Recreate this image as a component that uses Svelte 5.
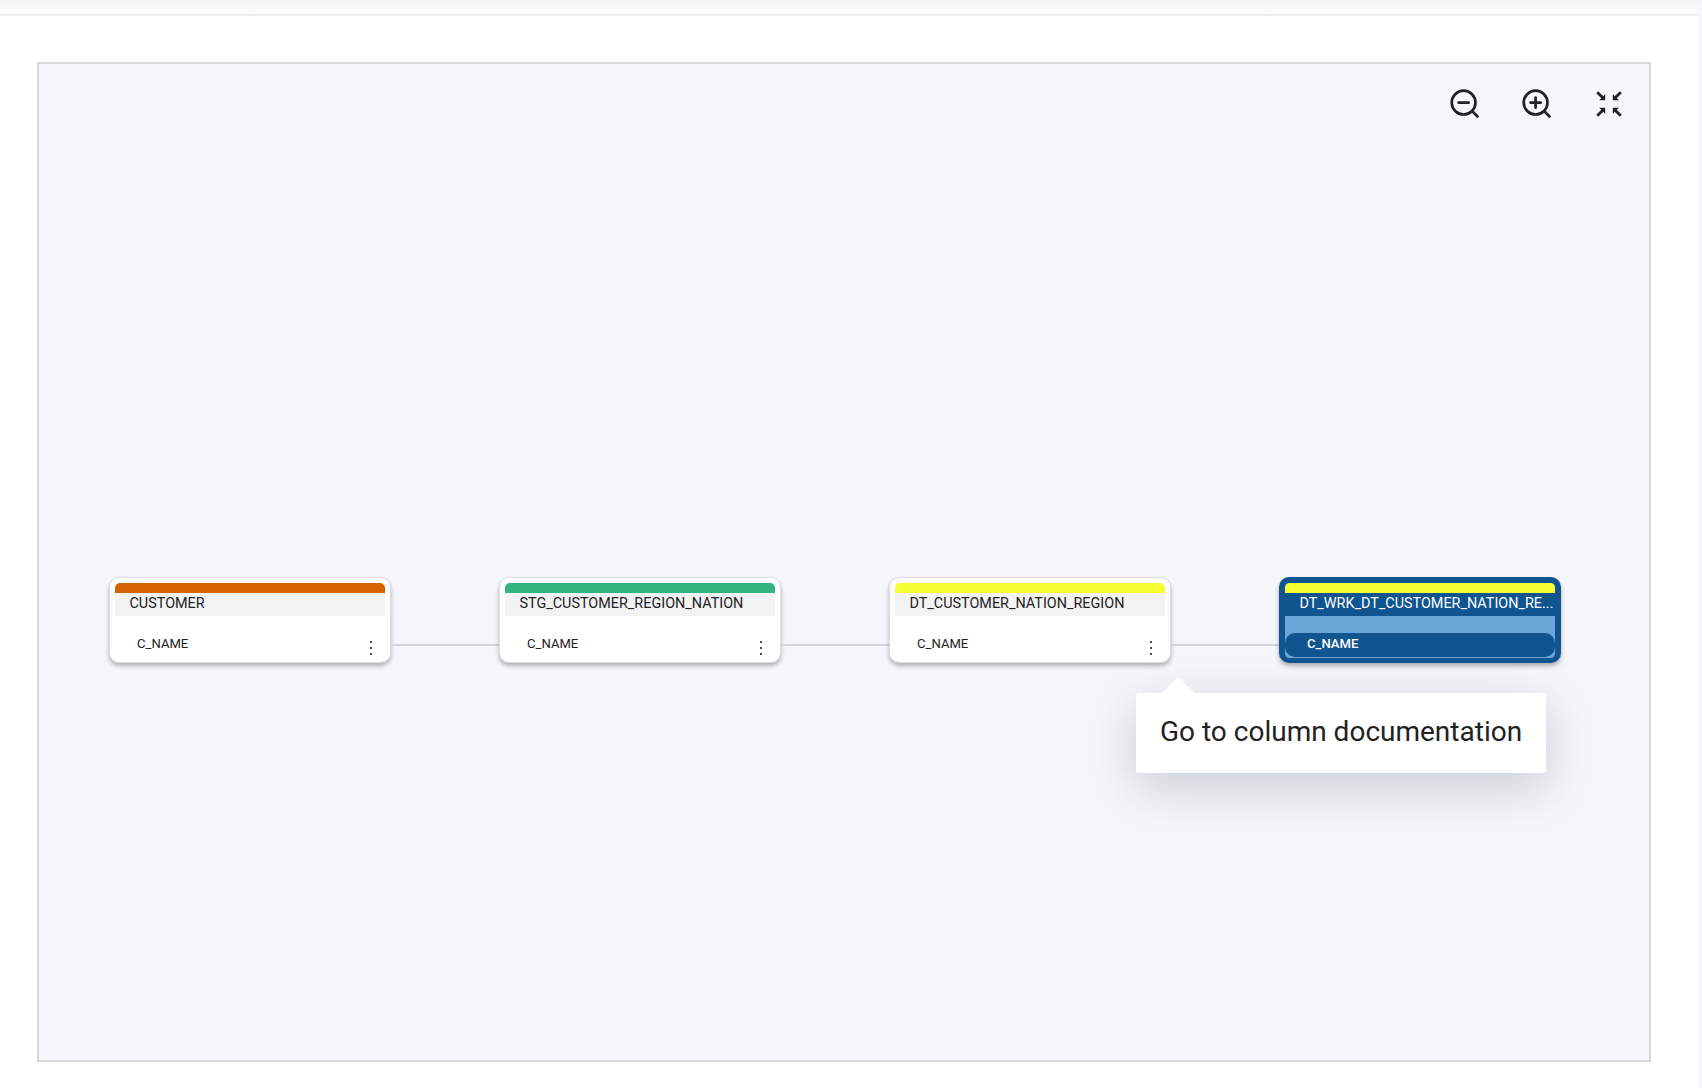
<script lang="ts">
	const nodes = [
		{ name: "CUSTOMER", bar: "#d46300" },
		{ name: "STG_CUSTOMER_REGION_NATION", bar: "#31b57f" },
		{ name: "DT_CUSTOMER_NATION_REGION", bar: "#f6ff33" },
		{ name: "DT_WRK_DT_CUSTOMER_NATION_RE...", bar: "#f6ff33", active: true },
	];
</script>

<div class="page">
	<div class="main">
		<header class="topbar"></header>
		<section class="canvas">
			<div class="toolbar">
				<svg viewBox="0 0 32 32" width="32" height="32" fill="none" stroke="#222" stroke-width="2.7" stroke-linecap="round">
					<circle cx="14.6" cy="14.6" r="11.9" />
					<path d="M23.5 23.5l5 5M9.5 14.6h10.2" />
				</svg>
				<svg viewBox="0 0 32 32" width="32" height="32" fill="none" stroke="#222" stroke-width="2.7" stroke-linecap="round">
					<circle cx="14.6" cy="14.6" r="11.9" />
					<path d="M23.5 23.5l5 5M9.5 14.6h10.2M14.6 9.5v10.2" />
				</svg>
				<svg class="shrink" viewBox="0 0 28 28" width="28" height="28" fill="#222" stroke="#222">
					{#each [0, 90, 180, 270] as angle}
						<g transform="rotate({angle} 14 14)">
							<path d="M10.2 10.2V4.2L4.2 10.2z" stroke="none" />
							<path d="M2.2 2.2L7.6 7.6" stroke-width="2.8" />
						</g>
					{/each}
				</svg>
			</div>

			<div class="flow">
				{#each nodes as node, i}
					{#if i > 0}
						<div class="edge"></div>
					{/if}
					<article class="node" class:active={node.active}>
						<div class="bar" style="background: {node.bar}"></div>
						<div class="title">{node.name}</div>
						<div class="column">
							<span>C_NAME</span>
							{#if !node.active}
								<svg class="more" viewBox="0 0 4 16" width="4" height="16" fill="#222">
									<circle cx="2" cy="2" r="1.1" />
									<circle cx="2" cy="8" r="1.1" />
									<circle cx="2" cy="14" r="1.1" />
								</svg>
							{/if}
						</div>
					</article>
				{/each}
			</div>

			<div class="tooltip">Go to column documentation</div>
		</section>
	</div>
	<div class="strip"></div>
</div>

<style>
	:global(body) {
		margin: 0;
		background: #fff;
	}

	* {
		box-sizing: border-box;
	}

	.page {
		display: flex;
		height: 1088px;
		font-family: Roboto, sans-serif;
		color: #222;
		overflow: hidden;
	}

	.main {
		flex: 1;
		min-width: 0;
	}

	.strip {
		width: 3px;
		background: #f6f6fa;
	}

	.topbar {
		height: 16px;
		background: linear-gradient(#f3f3f3, #fdfdfd 12px);
		border-bottom: 2px solid #eeeeee;
	}

	.canvas {
		position: relative;
		width: 1614px;
		height: 1000px;
		margin: 46px 0 0 37px;
		background: #f4f6fa;
		border: 2px solid #d9d9d9;
		padding: 513px 0 0 70px;
	}

	.toolbar {
		position: absolute;
		top: 24px;
		right: 26px;
		display: flex;
		align-items: flex-start;
		gap: 40px;
	}

	.shrink {
		margin: 2px 0 0 2px;
	}

	.flow {
		display: flex;
		align-items: flex-start;
	}

	.edge {
		width: 108px;
		height: 2px;
		margin-top: 67px;
		background: #d3d5da;
	}

	.node {
		width: 282px;
		height: 86px;
		padding: 5px;
		background: #fff;
		border: 1px solid #dcdcdc;
		border-radius: 10px;
		box-shadow: 0 3px 4px rgba(0, 0, 0, 0.28);
		font-size: 14.4px;
	}

	.bar {
		height: 10px;
		border-radius: 5px 5px 0 0;
	}

	.title {
		height: 23px;
		padding-left: 14.5px;
		background: #f3f3f3;
		line-height: 21px;
		white-space: nowrap;
		overflow: hidden;
	}

	.column {
		position: relative;
		height: 25px;
		margin-top: 18px;
		padding-left: 22px;
		font-size: 13.1px;
		line-height: 20px;
		border-radius: 10px;
	}

	.more {
		position: absolute;
		right: 12px;
		top: 6px;
	}

	.active {
		background: #6ca6d9;
		border: solid #10558f;
		border-width: 6px 6px 5px;
		padding: 0;
		color: #fff;
		box-shadow: 0 3px 5px rgba(0, 0, 0, 0.3);
	}

	.active .title {
		background: #10558f;
	}

	.active .column {
		height: 24px;
		margin-top: 17px;
		padding-top: 1px;
		background: #10558f;
		font-weight: 500;
	}

	.tooltip {
		position: absolute;
		left: 1097px;
		top: 629px;
		width: 410px;
		height: 80px;
		padding: 0 24px;
		background: #fff;
		border-radius: 3px;
		font-size: 28px;
		line-height: 78px;
		white-space: nowrap;
		box-shadow: 0 14px 48px rgba(30, 35, 60, 0.2);
	}

	.tooltip::before {
		content: "";
		position: absolute;
		left: 29px;
		top: -11px;
		width: 26px;
		height: 26px;
		background: #fff;
		border-radius: 3px;
		transform: rotate(45deg);
	}
</style>
